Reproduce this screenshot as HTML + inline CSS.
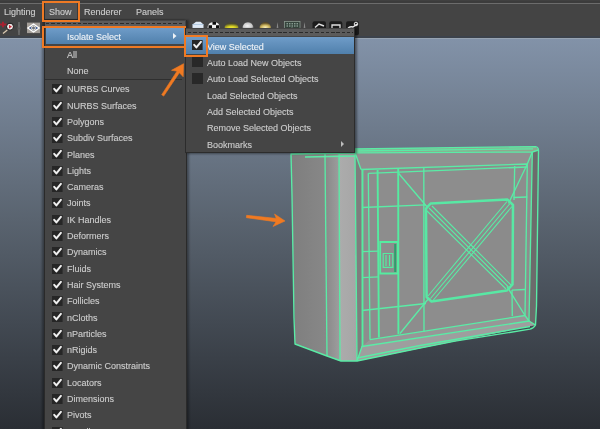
<!DOCTYPE html>
<html><head><meta charset="utf-8"><style>
*{margin:0;padding:0;box-sizing:border-box}
html,body{width:600px;height:429px;overflow:hidden;background:#444}
body{position:relative;font-family:"Liberation Sans",sans-serif;font-size:9px;color:#cdcdcd}
.a{position:absolute}
.t{position:absolute;line-height:10px;white-space:nowrap;will-change:transform;-webkit-text-stroke:0.12px currentColor}
#top{left:0;top:0;width:600px;height:4px;background:linear-gradient(#444 0,#3c3c3c 1px,#3c3c3c 3px);border-bottom:1px solid #6c6c6c}
#menubar{left:0;top:4px;width:600px;height:17px;background:#444}
#toolbar{left:0;top:21px;width:600px;height:16px;background:#444}
#vp{left:0;top:36px;width:600px;height:393px;border-top:2px solid #3c424b;background:linear-gradient(#97a3b1 0,#97a3b1 1px,#8292a8 1.5px,#5a6470 46%,#2a2e34 100%)}
#menu{left:44px;top:20px;width:143px;height:420px;background:#454545;border-left:1px solid #2a2a2a;border-right:1px solid #2a2a2a;box-shadow:-2px 0 2px rgba(0,0,0,.35),2px 0 2px rgba(0,0,0,.35)}
#sub{left:185px;top:28px;width:170px;height:125px;background:#454545;border:1px solid #2c2c2c;border-top:none;box-shadow:2px 1px 2px rgba(0,0,0,.4)}
.tear{position:absolute;height:5px;background:#5b5b5b}
.dash{position:absolute;height:1px;background:repeating-linear-gradient(90deg,#2a2a2a 0 3.4px,transparent 3.4px 5.3px)}
.hl{position:absolute;background:linear-gradient(#6f9cc8,#5080ac)}
.cb{position:absolute;width:11px;height:11px;background:#282828}
.orange{position:absolute;border:2px solid #ef7a24}
</style></head><body>
<div class="a" id="top"></div>
<div class="a" id="menubar">
  <span class="t" style="left:4px;top:3px">Lighting</span>
  <span class="t" style="left:84px;top:3px">Renderer</span>
  <span class="t" style="left:136px;top:3px">Panels</span>
</div>
<div class="a" style="left:44px;top:2px;width:34px;height:18px;background:#545454;border:1px solid #2e2e2e;border-right-color:#3a3a3a;border-top-color:#3a3a3a"></div>
<span class="t" style="left:49px;top:7px">Show</span>
<div class="a" id="toolbar"></div>
<svg class="a" style="left:0;top:17px" width="600" height="20">
<defs>
<radialGradient id="ry" cx="0.5" cy="1" r="0.75"><stop offset="0" stop-color="#ffff50"/><stop offset="0.45" stop-color="#d8d020"/><stop offset="1" stop-color="#4a4a30"/></radialGradient>
<radialGradient id="rw" cx="0.45" cy="0.6" r="0.6"><stop offset="0" stop-color="#f4f4f4"/><stop offset="0.7" stop-color="#c8c8c8"/><stop offset="1" stop-color="#7a7a7a"/></radialGradient>
<radialGradient id="rg" cx="0.5" cy="0.85" r="0.7"><stop offset="0" stop-color="#fff4c0"/><stop offset="0.5" stop-color="#d0b860"/><stop offset="1" stop-color="#5a4a28"/></radialGradient>
</defs>
<!-- manipulator -->
<g>
<path d="M0 7.5H6.5M3 4.8V10.2" stroke="#a82030" stroke-width="2"/>
<circle cx="10" cy="9.7" r="3.5" fill="#efe6e6" stroke="#151515" stroke-width="1"/>
<path d="M9 7.8L12 9.7L9 11.6z" fill="#c82838"/>
<path d="M7.3 13L3 16.5" stroke="#d8c8b0" stroke-width="1.3"/>
</g>
<path d="M19 5Q17.3 11.5 19 18M19 5Q20.7 11.5 19 18" stroke="#7a7a7a" stroke-width="0.7" fill="none"/>
<rect x="27" y="5.6" width="13" height="10.5" fill="#a49e98"/>
<path d="M27.8 11L33.5 7L39.2 11L33.5 15z" stroke="#fff" stroke-width="1.3" fill="#8c8c8c"/>
<path d="M30.5 11L33.5 9L36.5 11L33.5 13z" stroke="#f0f0f0" stroke-width="1" fill="#707478"/>
<circle cx="30.5" cy="11" r="0.9" fill="#3a5a9a"/><circle cx="36.5" cy="11" r="0.9" fill="#3a5a9a"/>
<!-- right icons -->
<path d="M192.5 7.5L196 4.8H200.5L203.5 7.5V11.8H192.5z" fill="#dfe9f5"/>
<path d="M192.5 7.5H203.5" stroke="#aac4e0" stroke-width="0.8"/>
<path d="M193 11.8H203" stroke="#6a88b0" stroke-width="0.8"/>
<path d="M207.5 11.8Q207.5 5 213.8 5Q220 5 220 11.8z" fill="#f2f2f2"/>
<path d="M212.5 5h3.5v2.8h-3.5z M208.5 8.2h3.5v3h-3.5z M216 8.2h3.5v3h-3.5z" fill="#0c0c0c"/>
<path d="M224.5 11.5Q225 5 231.5 5Q238 5 238.5 11.5z" fill="url(#ry)"/>
<path d="M242.5 11.5Q243 5 248 5Q253 5 253.5 11.5z" fill="url(#rw)"/>
<path d="M259.5 11.5Q260 5 265.3 5Q270.5 5 271 11.5z" fill="url(#rg)"/>
<path d="M277.5 5L276.5 12H278.5z" fill="#8a8a8a"/>
<rect x="284.5" y="4.5" width="15.5" height="8" fill="#35443c" stroke="#8a9a90" stroke-width="0.8"/>
<path d="M286.5 6.8h11.5M286.5 9h11.5" stroke="#b8d0c4" stroke-width="0.9" stroke-dasharray="1.5 1"/><path d="M290 12L292 10.5L294 12z" fill="#e0e8e4"/>
<path d="M304.5 5L303.5 12H305.5z" fill="#8a8a8a"/>
<rect x="312.5" y="4.3" width="13.5" height="9" rx="2" fill="#1c1c1c"/>
<path d="M315 10.5L319 7L324 9" stroke="#e0e0e0" stroke-width="1.5" fill="none"/>
<rect x="329.3" y="4.3" width="13" height="9" rx="2" fill="#1c1c1c"/>
<path d="M332 11V8H340V11" stroke="#e0e0e0" stroke-width="1.3" fill="none"/>
<rect x="346" y="4.3" width="13" height="14" rx="2" fill="#1c1c1c"/>
<path d="M348 11Q351 9 353 10Q356 8 357 7" stroke="#e8e8e8" stroke-width="1.5" fill="none"/>
<circle cx="356" cy="7" r="1.8" stroke="#e8e8e8" stroke-width="1" fill="none"/>
</svg>

<div class="a" id="vp"></div>
<svg class="a" style="left:0;top:0" width="600" height="429">
<defs>
<linearGradient id="gL" x1="0" x2="1" y1="0" y2="0"><stop offset="0" stop-color="#7e7e7e"/><stop offset="1" stop-color="#888"/></linearGradient>
<linearGradient id="gA" x1="0" x2="1" y1="0" y2="0"><stop offset="0" stop-color="#888"/><stop offset="1" stop-color="#9e9e9e"/></linearGradient>
<linearGradient id="gB" x1="0" x2="1" y1="0" y2="0"><stop offset="0" stop-color="#acacac"/><stop offset="1" stop-color="#a6a6a6"/></linearGradient>
</defs>
<!-- fills -->
<polygon points="291,154 325,154 327,356 295,344" fill="url(#gL)"/>
<polygon points="325,154 339,154 340,361 327,356" fill="url(#gA)"/>
<polygon points="339,154 355,152.5 357,361 340,361" fill="url(#gB)"/>
<polygon points="355,152.5 538.5,148.5 535.5,325 357,361" fill="#8d8d8d"/>
<polygon points="354,149 535.5,146.6 538.5,150 532.3,152 355,153" fill="#8fa88f"/>
<polygon points="532.3,152 538.5,150 536.5,306 535.5,325 529,321" fill="#6c6c6c"/>
<polygon points="355,152.5 361,169.5 362,346.5 357,361" fill="#7e7e7e"/>
<polygon points="355,152.5 532.3,152 527.3,164 361,169.5" fill="#909090"/>
<polygon points="370,339.7 525,315.5 529,321 362,346.5" fill="#979797"/>
<polygon points="362,346.5 529,321 535.5,325 357,361" fill="#9e9e9e"/>
<polygon points="430.5,203.6 507.5,199.6 513,205 512.5,284.5 507,290.5 431.5,301.5 426.6,297 426,208.5" fill="#8b8b8b"/>
<!-- green lines -->
<g stroke="#5aeca6" stroke-width="1.35" fill="none" stroke-linejoin="round">
<path d="M291,154 L355,153 L354,149 L535.5,146.6 Q538.5,147 538.5,150.5 L536.5,306 L535.5,325 Q533.5,328.5 530,329.2 L455,341.2 L420,348 L357,361 L341,361 L327,356 L295,344 L294,318 L292,195 Z"/>
<path d="M325,154 L327,356 M339,154 L340,361 M355,152.5 L357,361"/>
<path d="M305,157 L355,156 M355,151 L533,148.8 M355,152.8 L532.3,152 L538.5,150 M532.3,152 L529,321 M357,358 L420,345.5 L530,326.5"/>
<path d="M355,152.5 L361,169.5 M532.3,152 L527.3,164 M535.5,325 L529,321 L525,315.5 M357,361 L362,346.5"/>
<path d="M361,169.5 L527.3,164 L525,315.5 M529,321 L362,346.5 Z"/>
<path d="M368.3,173.3 L527.3,167 M370,339.7 L525,315.5"/>
<path d="M368.3,173.3 L370,339.7 M423.8,167.5 L424,332 M514.7,166 L514,200 M512,290 L512.3,316"/>
<path d="M362,207.5 L426,204.8 M513.5,197.5 L527.3,197 M362,310.5 L426,303.5 M512,290.2 L525,289.5"/>
<path d="M362,251.7 L378.8,251.2 M362,277.6 L378.8,276.8"/>
<path d="M398.5,173.3 L428,208 M527.3,164 L508.5,203.5 M507,286.5 L525,315.5 M429,298 L400,333.5"/>
<path d="M427,211 L506,289 M429,208 L508.5,287 M432,206 L511,285 M507,201.5 L428,296 M510,203.5 L430.5,298.5 M512,206.5 L433,300.5" stroke-width="1.1"/>
</g>
<g stroke="#55eca0" fill="none">
<path d="M380.2,242 L397.7,242 L397.7,273.5 L380.2,273.5 Z" stroke-width="1.8"/>
<path d="M383.2,253.5 L392.8,253.5 L392.8,267.3 L383.2,267.3 Z M386,255 L386,266 M389.5,255 L389.5,266" stroke-width="1.2"/>
<path d="M395.2,244 L395.2,272" stroke="#2e9e6c" stroke-width="2"/>
<path d="M362.5,169.5 L362.5,346.5 M377.6,170 L378.9,337.5 M398.2,168.5 L398.4,334" stroke-width="1.9"/>
</g>
<path d="M430.5,203.6 L507.5,199.6 L513,205 L512.5,284.5 L507,290.5 L431.5,301.5 L426.6,297 L426,208.5 Z" stroke="#58e8a4" stroke-width="2.5" fill="none" stroke-linejoin="round"/>
</svg>

<!-- main menu -->
<div class="a" id="menu"></div>
<div class="tear" style="left:45px;top:21px;width:140px"></div><div class="dash" style="left:46px;top:23px;width:138px"></div>
<div class="hl" style="left:46px;top:28.2px;width:139px;height:15.6px"></div>
<span class="t" style="left:67px;top:32px;color:#eef2f6">Isolate Select</span>
<svg class="a" style="left:173px;top:33px" width="4" height="6"><path d="M0 0L3.5 3L0 6z" fill="#eef2f6"/></svg>
<div class="orange" style="left:42.4px;top:25.8px;width:143.3px;height:21.8px"></div>
<span class="t" style="left:67px;top:50px">All</span>
<span class="t" style="left:67px;top:66.4px">None</span>
<div class="a" style="left:45px;top:79px;width:137px;height:1px;background:#2f2f2f"></div>
<svg class="a" style="left:51.7px;top:84.20px" width="11" height="10"><rect width="10.6" height="10" fill="#262626"/><path d="M2.2 4.8L4.4 7.4L8.9 1.8" stroke="#f0f0f0" stroke-width="2" fill="none" stroke-linecap="round" stroke-linejoin="round"/></svg>
<span class="t" style="left:67px;top:84.30px">NURBS Curves</span>
<svg class="a" style="left:51.7px;top:100.50px" width="11" height="10"><rect width="10.6" height="10" fill="#262626"/><path d="M2.2 4.8L4.4 7.4L8.9 1.8" stroke="#f0f0f0" stroke-width="2" fill="none" stroke-linecap="round" stroke-linejoin="round"/></svg>
<span class="t" style="left:67px;top:100.60px">NURBS Surfaces</span>
<svg class="a" style="left:51.7px;top:116.80px" width="11" height="10"><rect width="10.6" height="10" fill="#262626"/><path d="M2.2 4.8L4.4 7.4L8.9 1.8" stroke="#f0f0f0" stroke-width="2" fill="none" stroke-linecap="round" stroke-linejoin="round"/></svg>
<span class="t" style="left:67px;top:116.90px">Polygons</span>
<svg class="a" style="left:51.7px;top:133.10px" width="11" height="10"><rect width="10.6" height="10" fill="#262626"/><path d="M2.2 4.8L4.4 7.4L8.9 1.8" stroke="#f0f0f0" stroke-width="2" fill="none" stroke-linecap="round" stroke-linejoin="round"/></svg>
<span class="t" style="left:67px;top:133.20px">Subdiv Surfaces</span>
<svg class="a" style="left:51.7px;top:149.40px" width="11" height="10"><rect width="10.6" height="10" fill="#262626"/><path d="M2.2 4.8L4.4 7.4L8.9 1.8" stroke="#f0f0f0" stroke-width="2" fill="none" stroke-linecap="round" stroke-linejoin="round"/></svg>
<span class="t" style="left:67px;top:149.50px">Planes</span>
<svg class="a" style="left:51.7px;top:165.70px" width="11" height="10"><rect width="10.6" height="10" fill="#262626"/><path d="M2.2 4.8L4.4 7.4L8.9 1.8" stroke="#f0f0f0" stroke-width="2" fill="none" stroke-linecap="round" stroke-linejoin="round"/></svg>
<span class="t" style="left:67px;top:165.80px">Lights</span>
<svg class="a" style="left:51.7px;top:182.00px" width="11" height="10"><rect width="10.6" height="10" fill="#262626"/><path d="M2.2 4.8L4.4 7.4L8.9 1.8" stroke="#f0f0f0" stroke-width="2" fill="none" stroke-linecap="round" stroke-linejoin="round"/></svg>
<span class="t" style="left:67px;top:182.10px">Cameras</span>
<svg class="a" style="left:51.7px;top:198.30px" width="11" height="10"><rect width="10.6" height="10" fill="#262626"/><path d="M2.2 4.8L4.4 7.4L8.9 1.8" stroke="#f0f0f0" stroke-width="2" fill="none" stroke-linecap="round" stroke-linejoin="round"/></svg>
<span class="t" style="left:67px;top:198.40px">Joints</span>
<svg class="a" style="left:51.7px;top:214.60px" width="11" height="10"><rect width="10.6" height="10" fill="#262626"/><path d="M2.2 4.8L4.4 7.4L8.9 1.8" stroke="#f0f0f0" stroke-width="2" fill="none" stroke-linecap="round" stroke-linejoin="round"/></svg>
<span class="t" style="left:67px;top:214.70px">IK Handles</span>
<svg class="a" style="left:51.7px;top:230.90px" width="11" height="10"><rect width="10.6" height="10" fill="#262626"/><path d="M2.2 4.8L4.4 7.4L8.9 1.8" stroke="#f0f0f0" stroke-width="2" fill="none" stroke-linecap="round" stroke-linejoin="round"/></svg>
<span class="t" style="left:67px;top:231.00px">Deformers</span>
<svg class="a" style="left:51.7px;top:247.20px" width="11" height="10"><rect width="10.6" height="10" fill="#262626"/><path d="M2.2 4.8L4.4 7.4L8.9 1.8" stroke="#f0f0f0" stroke-width="2" fill="none" stroke-linecap="round" stroke-linejoin="round"/></svg>
<span class="t" style="left:67px;top:247.30px">Dynamics</span>
<svg class="a" style="left:51.7px;top:263.50px" width="11" height="10"><rect width="10.6" height="10" fill="#262626"/><path d="M2.2 4.8L4.4 7.4L8.9 1.8" stroke="#f0f0f0" stroke-width="2" fill="none" stroke-linecap="round" stroke-linejoin="round"/></svg>
<span class="t" style="left:67px;top:263.60px">Fluids</span>
<svg class="a" style="left:51.7px;top:279.80px" width="11" height="10"><rect width="10.6" height="10" fill="#262626"/><path d="M2.2 4.8L4.4 7.4L8.9 1.8" stroke="#f0f0f0" stroke-width="2" fill="none" stroke-linecap="round" stroke-linejoin="round"/></svg>
<span class="t" style="left:67px;top:279.90px">Hair Systems</span>
<svg class="a" style="left:51.7px;top:296.10px" width="11" height="10"><rect width="10.6" height="10" fill="#262626"/><path d="M2.2 4.8L4.4 7.4L8.9 1.8" stroke="#f0f0f0" stroke-width="2" fill="none" stroke-linecap="round" stroke-linejoin="round"/></svg>
<span class="t" style="left:67px;top:296.20px">Follicles</span>
<svg class="a" style="left:51.7px;top:312.40px" width="11" height="10"><rect width="10.6" height="10" fill="#262626"/><path d="M2.2 4.8L4.4 7.4L8.9 1.8" stroke="#f0f0f0" stroke-width="2" fill="none" stroke-linecap="round" stroke-linejoin="round"/></svg>
<span class="t" style="left:67px;top:312.50px">nCloths</span>
<svg class="a" style="left:51.7px;top:328.70px" width="11" height="10"><rect width="10.6" height="10" fill="#262626"/><path d="M2.2 4.8L4.4 7.4L8.9 1.8" stroke="#f0f0f0" stroke-width="2" fill="none" stroke-linecap="round" stroke-linejoin="round"/></svg>
<span class="t" style="left:67px;top:328.80px">nParticles</span>
<svg class="a" style="left:51.7px;top:345.00px" width="11" height="10"><rect width="10.6" height="10" fill="#262626"/><path d="M2.2 4.8L4.4 7.4L8.9 1.8" stroke="#f0f0f0" stroke-width="2" fill="none" stroke-linecap="round" stroke-linejoin="round"/></svg>
<span class="t" style="left:67px;top:345.10px">nRigids</span>
<svg class="a" style="left:51.7px;top:361.30px" width="11" height="10"><rect width="10.6" height="10" fill="#262626"/><path d="M2.2 4.8L4.4 7.4L8.9 1.8" stroke="#f0f0f0" stroke-width="2" fill="none" stroke-linecap="round" stroke-linejoin="round"/></svg>
<span class="t" style="left:67px;top:361.40px">Dynamic Constraints</span>
<svg class="a" style="left:51.7px;top:377.60px" width="11" height="10"><rect width="10.6" height="10" fill="#262626"/><path d="M2.2 4.8L4.4 7.4L8.9 1.8" stroke="#f0f0f0" stroke-width="2" fill="none" stroke-linecap="round" stroke-linejoin="round"/></svg>
<span class="t" style="left:67px;top:377.70px">Locators</span>
<svg class="a" style="left:51.7px;top:393.90px" width="11" height="10"><rect width="10.6" height="10" fill="#262626"/><path d="M2.2 4.8L4.4 7.4L8.9 1.8" stroke="#f0f0f0" stroke-width="2" fill="none" stroke-linecap="round" stroke-linejoin="round"/></svg>
<span class="t" style="left:67px;top:394.00px">Dimensions</span>
<svg class="a" style="left:51.7px;top:410.20px" width="11" height="10"><rect width="10.6" height="10" fill="#262626"/><path d="M2.2 4.8L4.4 7.4L8.9 1.8" stroke="#f0f0f0" stroke-width="2" fill="none" stroke-linecap="round" stroke-linejoin="round"/></svg>
<span class="t" style="left:67px;top:410.30px">Pivots</span>
<svg class="a" style="left:51.7px;top:426.50px" width="11" height="10"><rect width="10.6" height="10" fill="#262626"/><path d="M2.2 4.8L4.4 7.4L8.9 1.8" stroke="#f0f0f0" stroke-width="2" fill="none" stroke-linecap="round" stroke-linejoin="round"/></svg>
<span class="t" style="left:67px;top:426.60px">Handles</span>
<div class="a" id="sub"></div>
<div class="tear" style="left:186px;top:29px;width:168px;height:7px"></div>
<div class="dash" style="left:188px;top:32px;width:165px"></div>
<div class="hl" style="left:186px;top:37px;width:168px;height:17px"></div>
<svg class="a" style="left:192px;top:40.40px" width="11" height="10"><rect width="10.6" height="10" fill="#262626"/><path d="M2.2 4.8L4.4 7.4L8.9 1.8" stroke="#f0f0f0" stroke-width="2" fill="none" stroke-linecap="round" stroke-linejoin="round"/></svg>
<span class="t" style="left:207px;top:41.80px;color:#eef2f6">View Selected</span>
<div class="cb" style="left:192px;top:56.90px;height:10.3px;width:10.7px"></div>
<span class="t" style="left:207px;top:58.10px">Auto Load New Objects</span>
<div class="cb" style="left:192px;top:73.40px;height:10.3px;width:10.7px"></div>
<span class="t" style="left:207px;top:74.40px">Auto Load Selected Objects</span>
<span class="t" style="left:207px;top:90.70px">Load Selected Objects</span>
<span class="t" style="left:207px;top:107.00px">Add Selected Objects</span>
<span class="t" style="left:207px;top:123.30px">Remove Selected Objects</span>
<span class="t" style="left:207px;top:139.60px">Bookmarks</span>
<svg class="a" style="left:341px;top:141px" width="4" height="6"><path d="M0 0L3 3L0 6z" fill="#bdbdbd"/></svg>
<div class="orange" style="left:42px;top:0.6px;width:37.5px;height:21.9px"></div>
<div class="orange" style="left:184px;top:35px;width:24px;height:22px"></div>
<svg class="a" style="left:0;top:0" width="600" height="429">
<g fill="#f07a22" stroke="#f07a22" stroke-width="0.6" stroke-linejoin="round">
<path d="M163.7,96.1 L179.7,72.3 L177.3,70.7 L161.7,94.7 Z"/>
<path d="M183.6,63.7 L171.5,70.3 L178,71.3 L183.2,76.8 Z"/>
<path d="M246.4,217.7 L276.8,221.9 L277.2,218.5 L246.6,215.3 Z"/>
<path d="M285,221 L274.5,214 L277,220.2 L273,226.5 Z"/>
</g></svg>
</body></html>
